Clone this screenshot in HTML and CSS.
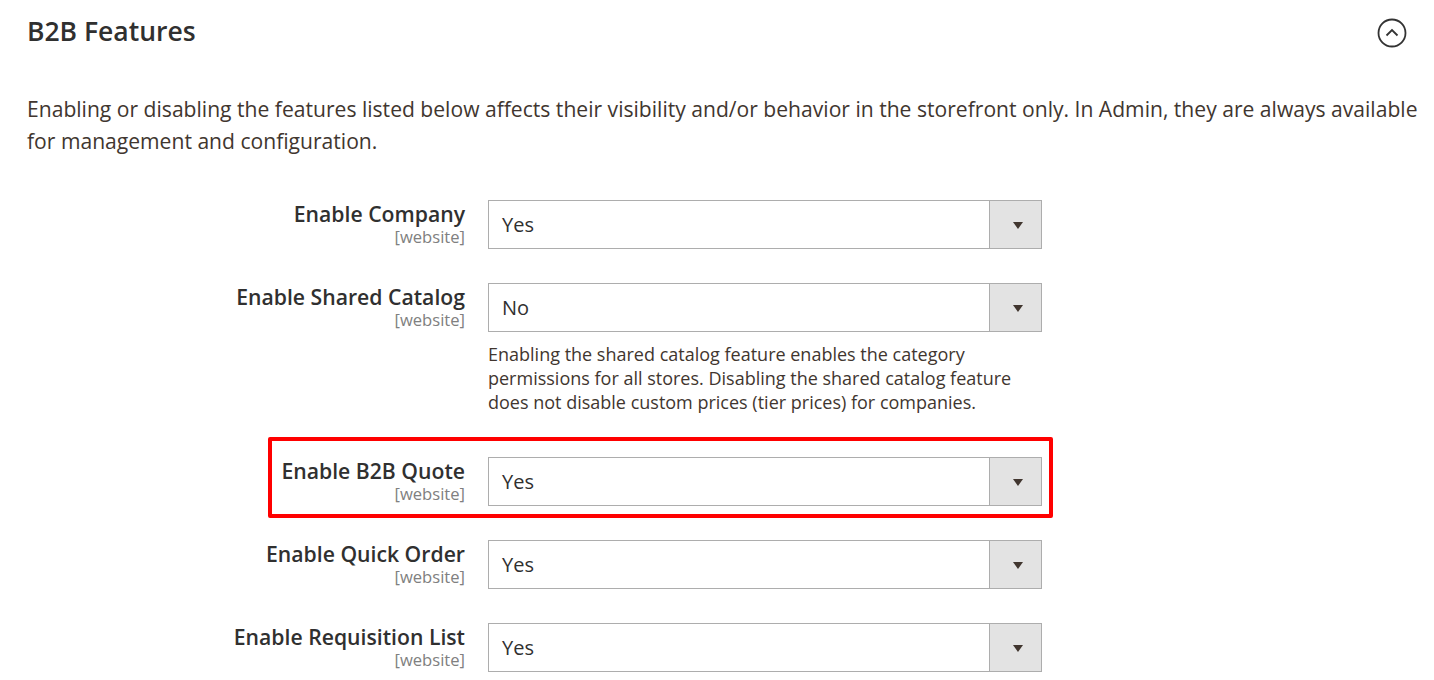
FILE: index.html
```html
<!DOCTYPE html>
<html>
<head>
    <title>B2B Features</title>
    <meta name="viewport" content="width=device-width, initial-scale=1.0">
    <link rel="stylesheet" href="styles.css">
</head>
<body>
    <div class="section">
        <!-- section header with collapse toggle -->
        <div class="section-head">
            <h2 class="section-title">B2B Features</h2>
            <span class="toggle">
                <svg width="30" height="30" viewBox="0 0 30 30">
                    <circle cx="15" cy="15" r="13.5" fill="none" stroke="#333" stroke-width="1.8"/>
                    <path d="M9.5 17.5 L15 12 L20.5 17.5" fill="none" stroke="#333" stroke-width="1.8"/>
                </svg>
            </span>
        </div>

        <p class="section-intro">Enabling or disabling the features listed below affects their visibility and/or behavior in the storefront only. In Admin, they are always available for management and configuration.</p>

        <div class="fields">
            <div class="field">
                <div class="field-label">
                    <span class="label-text">Enable Company</span>
                    <span class="scope">[website]</span>
                </div>
                <div class="field-control">
                    <div class="select"><span class="select-value">Yes</span><span class="select-btn"></span></div>
                </div>
            </div>

            <div class="field">
                <div class="field-label">
                    <span class="label-text">Enable Shared Catalog</span>
                    <span class="scope">[website]</span>
                </div>
                <div class="field-control">
                    <div class="select"><span class="select-value">No</span><span class="select-btn"></span></div>
                    <p class="note">Enabling the shared catalog feature enables the category permissions for all stores. Disabling the shared catalog feature does not disable custom prices (tier prices) for companies.</p>
                </div>
            </div>

            <!-- highlighted row -->
            <div class="field highlight">
                <div class="field-label">
                    <span class="label-text">Enable B2B Quote</span>
                    <span class="scope">[website]</span>
                </div>
                <div class="field-control">
                    <div class="select"><span class="select-value">Yes</span><span class="select-btn"></span></div>
                </div>
            </div>

            <div class="field">
                <div class="field-label">
                    <span class="label-text">Enable Quick Order</span>
                    <span class="scope">[website]</span>
                </div>
                <div class="field-control">
                    <div class="select"><span class="select-value">Yes</span><span class="select-btn"></span></div>
                </div>
            </div>

            <div class="field">
                <div class="field-label">
                    <span class="label-text">Enable Requisition List</span>
                    <span class="scope">[website]</span>
                </div>
                <div class="field-control">
                    <div class="select"><span class="select-value">Yes</span><span class="select-btn"></span></div>
                </div>
            </div>
        </div>
    </div>
</body>
</html>
```

FILE: styles.css
```css
body {
    font-family: "Open Sans", "Noto Sans", sans-serif;
    background-color: #ffffff;
    color: #333333;
    margin: 0;
    overflow: hidden;
}

.section {
    padding: 0 10px 0 27px;
}

/* header row: title on the left, toggle on the right */
.section-head {
    display: flex;
    justify-content: space-between;
    align-items: center;
    height: 62px;
}

.section-title {
    font-size: 26.5px;
    font-weight: 600;
    color: #303030;
    margin: 0;
}

.toggle {
    display: flex;
    margin-top: 4px;
    margin-right: 17px;
}

.section-intro {
    font-size: 21.1px;
    line-height: 32px;
    color: #41362f;
    margin: 31px 0 0 0;
}

.fields {
    margin-top: 43px;
    display: flex;
    flex-direction: column;
    align-items: flex-start;
}

.field {
    display: flex;
    gap: 23px;
    margin-bottom: 34px;
    position: relative;
}

.field-label {
    width: 438px;
    display: flex;
    flex-direction: column;
    align-items: flex-end;
}

.label-text {
    font-size: 21.2px;
    font-weight: 600;
    color: #303030;
    line-height: 28px;
}

.scope {
    font-size: 16.6px;
    color: #808080;
    line-height: 18px;
}

.field-control {
    width: 554px;
}

/* fake select box */
.select {
    display: flex;
    height: 49px;
    border: 1px solid #adadad;
    box-sizing: border-box;
    background-color: #fff;
}

.select-value {
    flex: 1;
    font-size: 20px;
    line-height: 48px;
    padding-left: 13px;
    color: #303030;
}

.select-btn {
    width: 51px;
    border-left: 1px solid #adadad;
    background-color: #e3e3e3;
    position: relative;
}

.select-btn::after {
    content: "";
    position: absolute;
    left: 23px;
    top: 21px;
    border-left: 5.5px solid transparent;
    border-right: 5.5px solid transparent;
    border-top: 7px solid #41362f;
}

.note {
    font-size: 18px;
    line-height: 24px;
    color: #41362f;
    margin: 10px 0 0 0;
    padding-bottom: 9px;
}

/* red annotation frame around the quote row */
.highlight::after {
    content: "";
    position: absolute;
    left: 241px;
    right: -11px;
    top: -20px;
    bottom: -12px;
    border: 4px solid #ff0000;
    border-radius: 2px;
    pointer-events: none;
}
```
